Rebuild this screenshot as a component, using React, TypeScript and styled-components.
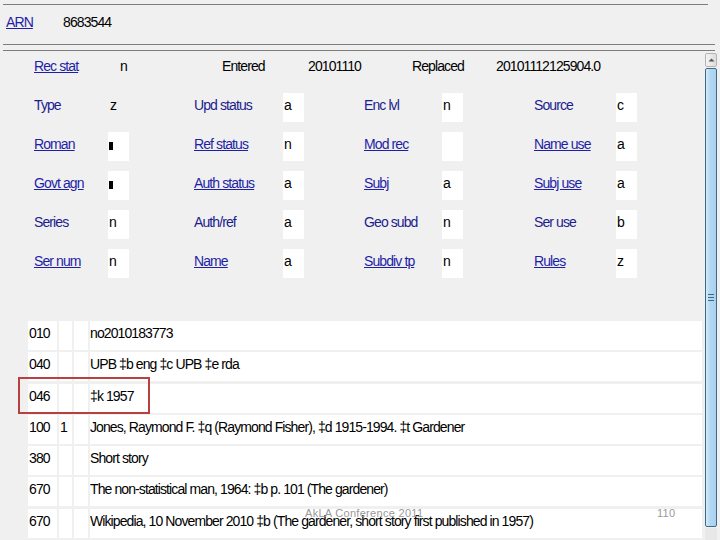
import { Fragment } from 'react';
import styled, { createGlobalStyle } from 'styled-components';

type FixedField = {
	label: string;
	value: string;
	link?: boolean;
	boxed?: boolean;
};

type VarField = {
	tag: string;
	ind1: string;
	ind2: string;
	text: string;
};

const FILL = '|';

const fixedRows: FixedField[][] = [
	[
		{ label: 'Type', value: 'z', boxed: false },
		{ label: 'Upd status', value: 'a' },
		{ label: 'Enc lvl', value: 'n' },
		{ label: 'Source', value: 'c' }
	],
	[
		{ label: 'Roman', value: FILL, link: true },
		{ label: 'Ref status', value: 'n', link: true },
		{ label: 'Mod rec', value: '', link: true },
		{ label: 'Name use', value: 'a', link: true }
	],
	[
		{ label: 'Govt agn', value: FILL, link: true },
		{ label: 'Auth status', value: 'a', link: true },
		{ label: 'Subj', value: 'a', link: true },
		{ label: 'Subj use', value: 'a', link: true }
	],
	[
		{ label: 'Series', value: 'n' },
		{ label: 'Auth/ref', value: 'a' },
		{ label: 'Geo subd', value: 'n' },
		{ label: 'Ser use', value: 'b' }
	],
	[
		{ label: 'Ser num', value: 'n', link: true },
		{ label: 'Name', value: 'a', link: true },
		{ label: 'Subdiv tp', value: 'n', link: true },
		{ label: 'Rules', value: 'z', link: true }
	]
];

const varFields: VarField[] = [
	{ tag: '010', ind1: '', ind2: '', text: 'no2010183773' },
	{ tag: '040', ind1: '', ind2: '', text: 'UPB ‡b eng ‡c UPB ‡e rda' },
	{ tag: '046', ind1: '', ind2: '', text: '‡k 1957' },
	{ tag: '100', ind1: '1', ind2: '', text: 'Jones, Raymond F. ‡q (Raymond Fisher), ‡d 1915-1994. ‡t Gardener' },
	{ tag: '380', ind1: '', ind2: '', text: 'Short story' },
	{ tag: '670', ind1: '', ind2: '', text: 'The non-statistical man, 1964: ‡b p. 101 (The gardener)' },
	{ tag: '670', ind1: '', ind2: '', text: 'Wikipedia, 10 November 2010 ‡b (The gardener, short story first published in 1957)' }
];

const GlobalStyle = createGlobalStyle`
	html, body {
		margin: 0;
		padding: 0;
		background: #f0f0f0;
	}

	body {
		font-family: "Liberation Sans", Arial, sans-serif;
		font-size: 14px;
		letter-spacing: -0.9px;
		color: #000;
		overflow: hidden;
	}
`;

const Page = styled.div`
	position: relative;
	width: 720px;
	height: 540px;
	display: flex;
	flex-direction: column;
	overflow: hidden;
`;

const Header = styled.header`
	margin: 4px 12px 0 3px;
	border-top: 1px solid #7c7c7c;
`;

const ArnRow = styled.div`
	height: 39px;
	box-sizing: border-box;
	padding: 9px 0 0 3px;
	display: flex;
	line-height: 16px;
`;

const ArnLabel = styled.a`
	width: 57px;
	color: #1f1fa6;
	text-decoration: underline;
`;

const DoubleRule = styled.div`
	height: 5px;
	border-top: 1px solid #7c7c7c;
	border-bottom: 1px solid #7c7c7c;
	margin-right: -7px;
`;

const Body = styled.div`
	flex: 1;
	display: flex;
	min-height: 0;
`;

const Pane = styled.main`
	position: relative;
	flex: 1;
	padding-top: 3px;
`;

const RecRow = styled.div`
	height: 29px;
	padding-left: 34px;
	display: grid;
	grid-template-columns: 86px 102px 86px 104px 84px auto;
	line-height: 25px;
	margin-bottom: 10px;
`;

const FixedGrid = styled.div`
	padding-left: 34px;
	display: grid;
	grid-template-columns: 74px 86px 89px 81px 78px 92px 82px 21px;
	grid-auto-rows: 29px;
	row-gap: 10px;
	line-height: 25px;
`;

const Label = styled.span<{ $link?: boolean }>`
	color: ${(p) => (p.$link ? '#1f1fa6' : '#1c1c8e')};
	text-decoration: ${(p) => (p.$link ? 'underline' : 'none')};
	white-space: nowrap;
	align-self: start;
`;

const Plain = styled.span`
	color: #000;
	white-space: nowrap;
`;

const ValueBox = styled.span<{ $boxed: boolean }>`
	width: 21px;
	height: 29px;
	box-sizing: border-box;
	padding-left: ${(p) => (p.$boxed ? '1px' : '2px')};
	background: ${(p) => (p.$boxed ? '#fff' : 'transparent')};
	color: #000;
	display: flex;
	align-items: flex-start;
`;

const FillMark = styled.span`
	display: block;
	width: 4px;
	height: 8px;
	margin-top: 10px;
	background: #000;
`;

const VarTable = styled.div`
	position: relative;
	margin: 43px 2px 0 28px;
	display: flex;
	flex-direction: column;
	gap: 2.3px;
`;

const VarRow = styled.div`
	display: grid;
	grid-template-columns: 29px 13px 14px 1fr;
	column-gap: 2px;
	height: 29px;
	line-height: 25px;
`;

const Cell = styled.div<{ $pad?: number }>`
	background: #fff;
	padding-left: ${(p) => p.$pad ?? 0}px;
	white-space: nowrap;
	overflow: hidden;
`;

const Highlight = styled.div`
	position: absolute;
	left: -10px;
	top: 56px;
	width: 132px;
	height: 37px;
	box-sizing: border-box;
	border: 2px solid #b8413f;
	pointer-events: none;
`;

const ScrollBar = styled.aside`
	width: 12px;
	margin: 2px 3px 0 1px;
	display: flex;
	flex-direction: column;
	gap: 1px;
`;

const ArrowButton = styled.div`
	height: 14px;
	box-sizing: border-box;
	border: 1px solid #b4b4b4;
	border-radius: 2px;
	background: linear-gradient(to right, #f4f4f4, #dcdcdc);
	display: flex;
	align-items: center;
	justify-content: center;
`;

const Thumb = styled.div`
	height: 459px;
	box-sizing: border-box;
	border: 1px solid #3e6a8a;
	border-radius: 2px;
	background: linear-gradient(to right, #d6ebfa, #b3d7f1 40%, #a9d1ee);
	display: flex;
	align-items: center;
	justify-content: center;
`;

const Track = styled.div`
	flex: 1;
	background: #e8e8e8;
`;

const Watermark = styled.span<{ $left: number }>`
	position: absolute;
	top: 507px;
	left: ${(p) => p.$left}px;
	font-size: 11px;
	letter-spacing: 0.3px;
	color: #9a9a9a;
	pointer-events: none;
`;

const App = () => {
	return (
		<>
			<GlobalStyle />
			<Page>
				<Header>
					<ArnRow>
						<ArnLabel>ARN</ArnLabel>
						<Plain>8683544</Plain>
					</ArnRow>
					<DoubleRule />
				</Header>

				<Body>
					<Pane>
						<RecRow>
							<Label $link>Rec stat</Label>
							<Plain>n</Plain>
							<Plain>Entered</Plain>
							<Plain>20101110</Plain>
							<Plain>Replaced</Plain>
							<Plain>20101112125904.0</Plain>
						</RecRow>

						<FixedGrid>
							{fixedRows.flat().map((field) => (
								<Fragment key={field.label}>
									<Label $link={field.link}>{field.label}</Label>
									<ValueBox $boxed={field.boxed !== false}>
										{field.value === FILL ? <FillMark /> : field.value}
									</ValueBox>
								</Fragment>
							))}
						</FixedGrid>

						<VarTable>
							{varFields.map((field, i) => (
								<VarRow key={i}>
									<Cell $pad={1}>{field.tag}</Cell>
									<Cell $pad={1}>{field.ind1}</Cell>
									<Cell>{field.ind2}</Cell>
									<Cell>{field.text}</Cell>
								</VarRow>
							))}
							<Highlight />
						</VarTable>
					</Pane>

					<ScrollBar>
						<ArrowButton>
							<svg width="7" height="4" viewBox="0 0 7 4">
								<path d="M0.5 3.5 L3.5 0.5 L6.5 3.5 Z" fill="#555" />
							</svg>
						</ArrowButton>
						<Thumb>
							<svg width="6" height="7" viewBox="0 0 6 7">
								<path d="M0 0.5 H6 M0 3.5 H6 M0 6.5 H6" stroke="#3e6a8a" strokeWidth="1" />
							</svg>
						</Thumb>
						<Track />
					</ScrollBar>
				</Body>

				<Watermark $left={305}>AkLA Conference 2011</Watermark>
				<Watermark $left={657}>110</Watermark>
			</Page>
		</>
	);
};

export default App;
